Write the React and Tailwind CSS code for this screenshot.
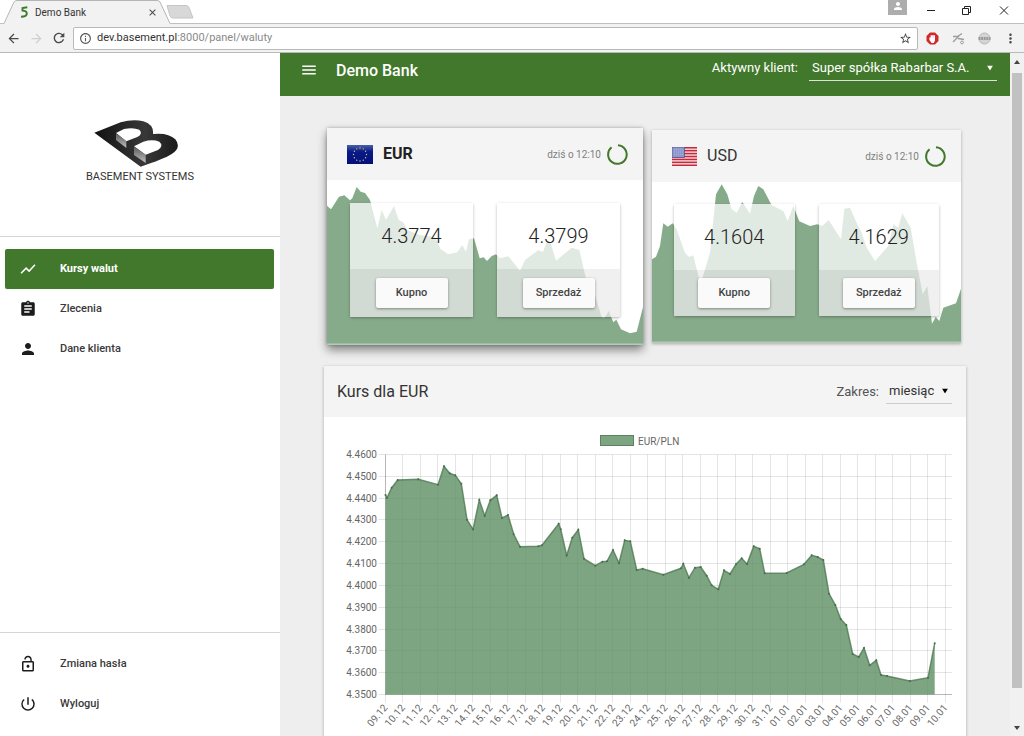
// src/App.jsx
import React, { useState } from 'react';
import {
  MdArrowBack,
  MdArrowForward,
  MdAssignment,
  MdClose,
  MdInfoOutline,
  MdLockOpen,
  MdMenu,
  MdMoreVert,
  MdPerson,
  MdPowerSettingsNew,
  MdRefresh,
  MdShowChart,
  MdStarBorder,
} from 'react-icons/md';

// --- Chart geometry (svg units) ---
const AXIS_LEFT = 61.5;
const AXIS_TOP = 37.5;
const AXIS_BOTTOM = 277.5;
const DAY_STEP = 17.5;
const RATE_STEP = 240 / 11;

const RATE_LABELS = [
  '4.4600', '4.4500', '4.4400', '4.4300', '4.4200', '4.4100',
  '4.4000', '4.3900', '4.3800', '4.3700', '4.3600', '4.3500',
];

const DAY_LABELS = [
  '09.12', '10.12', '11.12', '12.12', '13.12', '14.12', '15.12', '16.12', '17.12', '18.12', '19.12',
  '20.12', '21.12', '22.12', '23.12', '24.12', '25.12', '26.12', '27.12', '28.12', '29.12', '30.12',
  '31.12', '01.01', '02.01', '03.01', '04.01', '05.01', '06.01', '07.01', '08.01', '09.01', '10.01',
];

const MONTH_POINTS = [
  [61.5, 78], [63, 80.7], [67.7, 70.7], [73.7, 63], [94.3, 62.3], [114, 67.7], [120, 49.3], [125.7, 56.3],
  [131.3, 58.3], [137.3, 66.7], [143, 102.7], [149, 112.3], [155.3, 83], [160.7, 98.7], [166.3, 83.3],
  [172.7, 78.3], [178, 101], [184, 98], [189.7, 117.3], [196, 129.7], [214.3, 129.3], [218, 128.3],
  [234.7, 106.7], [236.7, 112.3], [242.7, 138.3], [248.3, 120.7], [254.3, 112.7], [260, 141.7],
  [271.3, 148.7], [278.3, 144.7], [283, 144.3], [289, 133], [295, 146], [300.7, 123.3], [306.3, 124.3],
  [312.7, 153], [318.7, 151.7], [339.3, 157.7], [357, 151.3], [359.3, 146.7], [365, 160.7], [371, 150.7],
  [376.7, 150], [382.7, 158.7], [387.7, 168.3], [394.3, 172.3], [400, 153.3], [406, 157], [412, 147.3],
  [417.7, 141.3], [423, 147], [429.7, 129.3], [435.7, 131.7], [440.7, 156.3], [462.7, 156], [480, 147.3],
  [487.7, 138.3], [493.7, 140], [499.3, 143], [505, 176.7], [511.3, 188], [516.7, 202], [522.3, 208],
  [528.7, 237], [534.7, 240], [540, 231], [545.7, 248.3], [552.3, 243.3], [557, 258], [563, 259],
  [585.7, 264], [604, 260.7], [610.7, 226.3],
];

const EUR_POINTS = [
  [0, 25.7], [4, 29.3], [12, 16.7], [17.3, 15.3], [23, 20.3], [25.3, 18.3], [29.7, 7], [33.7, 11.7],
  [38, 13], [43, 20], [50.3, 48.3], [54.7, 30], [59, 40], [67, 26], [71.7, 40], [76.3, 42.3], [80, 50],
  [93, 55], [108, 57], [113.7, 69.3], [121.3, 74.3], [130.3, 72.3], [135.3, 65], [139, 71.7], [142, 59],
  [147, 58.3], [152.7, 78.3], [156.7, 77.3], [160, 81], [164.7, 76], [169, 74.3], [173, 78.3],
  [181.3, 76.3], [193, 90.7], [198, 80], [211.3, 70], [216, 72], [219.7, 61.7], [223.7, 63.3],
  [229, 80.7], [244.7, 67.7], [252.3, 70], [258.7, 97.3], [268, 115], [274.7, 137.3], [278, 137.3],
  [281.7, 131], [286.3, 142.3], [289.3, 139.7], [294, 149.3], [303, 153.3], [309.7, 151.7], [316, 127],
];

const USD_POINTS = [
  [0, 77.3], [4, 74.7], [8, 64], [11.3, 41.3], [15.7, 44.7], [20.7, 41.3], [24.7, 47.3], [33, 70.7],
  [37, 75], [41.3, 73.3], [47, 96.3], [50.3, 96.3], [58, 70.7], [64, 12.3], [69.7, 2.3], [75.3, 12.3],
  [79.7, 27.3], [84.7, 30.7], [90.3, 20], [98, 31.7], [102, 14], [106.3, 4], [111.3, 7.3],
  [119.7, 23.3], [131.3, 29], [135.7, 39], [141.3, 24], [147.3, 39.3], [158, 44], [165.3, 42.3],
  [170, 44], [176.7, 38], [189, 57.3], [192.3, 26.7], [198, 25.7], [203, 37.3], [209.7, 51],
  [214.7, 65.7], [223, 79], [236.3, 64], [241.3, 42.3], [246.3, 45.7], [250.3, 31.3], [258.7, 45.7],
  [264.7, 80.7], [270.7, 112.3], [275.3, 104], [280, 141.7], [283.7, 135], [287.3, 139],
  [291.3, 125.7], [304, 121.3], [309, 106.7],
];

const toPath = (points) => points.map(([x, y], i) => `${i ? 'L' : 'M'}${x} ${y}`).join(' ');

function BrowserBar() {
  return (
    <div className="shrink-0 bg-white">
      <div className="flex h-6 items-stretch border-b border-[#c0c0c0]">
        <div className="relative -mb-px ml-1 flex w-[166px] items-center pl-4 pr-3">
          <svg className="absolute inset-0 h-full w-full" viewBox="0 0 166 24" preserveAspectRatio="none" aria-hidden="true">
            <path d="M0 23.5 L10 2 Q11 .5 13 .5 H153 Q155 .5 156 2 L166 23.5 V24 H0Z" fill="#f2f2f2" />
            <path d="M0 23.5 L10 2 Q11 .5 13 .5 H153 Q155 .5 156 2 L166 23.5" fill="none" stroke="#b5b5b5" />
          </svg>
          <svg className="relative h-3 w-2" viewBox="0 0 8 12" fill="none" aria-hidden="true">
            <path d="M7.3 1.2 L2.5 2 V4.6 Q6.8 4.8 6.8 7.6 Q6.6 10.6 1 10.8" stroke="#3f7a2e" strokeWidth="1.9" />
          </svg>
          <span className="relative ml-[7px] flex-1 text-[10px] text-[#333]">Demo Bank</span>
          <button type="button" aria-label="Zamknij kartę" className="relative text-[#444]">
            <MdClose className="size-[11px]" />
          </button>
        </div>
        <button type="button" aria-label="Nowa karta" className="-ml-1">
          <svg width="28" height="14" viewBox="0 0 28 14" aria-hidden="true">
            <path d="M1 .5 H20 Q22 .5 23 2.5 L27 13 H7 Q5 13 4 11Z" fill="#d8d8d8" stroke="#c6c6c6" />
          </svg>
        </button>
        <div className="flex flex-1 items-start justify-end">
          <span className="mr-[18px] flex h-[15px] w-[19px] items-start justify-center bg-[#adadad] text-white">
            <MdPerson className="size-3" />
          </span>
          <button type="button" aria-label="Minimalizuj" className="mr-6 mt-[5px] text-[#222]">
            <svg width="12" height="11" viewBox="0 0 12 11" aria-hidden="true"><path d="M2 5.5H10" stroke="currentColor" /></svg>
          </button>
          <button type="button" aria-label="Przywróć" className="mr-7 mt-[5px] text-[#222]">
            <svg width="10" height="11" viewBox="0 0 10 11" fill="none" stroke="currentColor" aria-hidden="true">
              <path d="M1.5 3.5H7.5V9.5H1.5Z M3.5 3V1.5H9.5V7.5H8" />
            </svg>
          </button>
          <button type="button" aria-label="Zamknij" className="mr-[15px] mt-[5px] text-[#222]">
            <svg width="10" height="11" viewBox="0 0 10 11" stroke="currentColor" aria-hidden="true">
              <path d="M1 1.5L9 9.5M9 1.5L1 9.5" />
            </svg>
          </button>
        </div>
      </div>
      <div className="flex h-[29px] items-center border-b border-[#b9b9b9] bg-[#f2f2f2] px-[6px]">
        <button type="button" aria-label="Wstecz" className="mr-2 text-[#4a4a4a]"><MdArrowBack className="size-[15px]" /></button>
        <button type="button" aria-label="Dalej" className="mr-[7px] text-[#cfcfcf]"><MdArrowForward className="size-[15px]" /></button>
        <button type="button" aria-label="Odśwież" className="mr-[6px] text-[#4a4a4a]"><MdRefresh className="size-4" /></button>
        <div className="flex h-[23px] flex-1 items-center rounded-xs border border-[#b9b9b9] bg-white px-[5px]">
          <MdInfoOutline className="size-[13px] text-[#555]" />
          <a href="#waluty" className="ml-[5px] flex-1 text-[11px] leading-4 text-[#8a8a8a]">
            <span className="text-[#333]">dev.basement.pl</span>:8000/panel/waluty
          </a>
          <MdStarBorder className="size-[13px] text-[#444]" />
        </div>
        <svg className="ml-2 size-[13px]" viewBox="0 0 13 13" aria-hidden="true">
          <path d="M4 .5H9L12.5 4V9L9 12.5H4L.5 9V4Z" fill="#cf2a2a" />
          <path d="M4.600 3.200H9V8.500L7.800 11H5.600L3.400 8V5.500H4.600Z" fill="#fff" />
          <path d="M6.100 3V6M7.500 3V6" stroke="#e9a0a0" strokeWidth=".4" />
        </svg>
        <svg className="ml-[13px] size-[13px]" viewBox="0 0 13 13" fill="none" stroke="#9d9d9d" aria-hidden="true">
          <path d="M1 4.500H5.500L10 1.500M7 4L1 10M6 6.500L12 7.500" strokeWidth="1.4" />
          <circle cx="10" cy="10.5" r="1.4" />
        </svg>
        <svg className="ml-[13px] size-[13px]" viewBox="0 0 13 13" aria-hidden="true">
          <circle cx="6.5" cy="6.5" r="5.5" fill="#d4d4d4" stroke="#b8b8b8" />
          <path d="M.5 6.5H12.5" stroke="#9a9a9a" strokeWidth="3" strokeDasharray="2 .6" />
        </svg>
        <button type="button" aria-label="Menu przeglądarki" className="ml-3 text-[#4a4a4a]"><MdMoreVert className="size-[15px]" /></button>
      </div>
    </div>
  );
}

function Logo() {
  return (
    <div className="flex h-[184px] shrink-0 flex-col items-center border-b border-[#d5d5d5] pt-[66px]">
      <svg className="mr-[6px]" width="86" height="50" viewBox="282 56 258 150" aria-hidden="true">
        <defs>
          <linearGradient id="face" x1="0" y1="0" x2="0" y2="1">
            <stop offset="0" stopColor="#5a5a5a" />
            <stop offset="1" stopColor="#bdbdbd" />
          </linearGradient>
          <linearGradient id="body" x1="0" y1="0" x2="1" y2="0">
            <stop offset="0" stopColor="#111" />
            <stop offset=".6" stopColor="#383838" />
            <stop offset="1" stopColor="#1a1a1a" />
          </linearGradient>
        </defs>
        <path
          d="M283 97 L362 66 Q400 55 430 63 Q462 73 459 101 Q505 96 526 117 Q546 142 514 162 Q490 177 422 199Z"
          fill="url(#body)"
        />
        <path d="M348 98 L372 86 Q400 80 418 88 Q430 100 412 110 L379 123Z" fill="#fff" />
        <path d="M348 98 L379 123 V143 L348 119Z" fill="url(#face)" />
        <path d="M402 138 L430 124 Q458 116 478 124 Q492 136 474 149 L437 163Z" fill="#fff" />
        <path d="M402 138 L437 163 V188 L402 164Z" fill="url(#face)" />
      </svg>
      <span className="text-[11px] leading-4 text-[#333]">BASEMENT SYSTEMS</span>
    </div>
  );
}

function NavItem({ icon: Icon, label, active }) {
  return (
    <a
      href={`#${label}`}
      className={
        active
          ? 'flex h-10 items-center gap-[23px] rounded-xs bg-[#41782c] px-[14px] text-[11px] font-bold text-white shadow-xs'
          : 'flex h-10 items-center gap-[23px] px-[14px] text-[11px] font-medium text-[#3a3a3a]'
      }
    >
      <Icon className={active ? 'size-[18px] text-white' : 'size-[18px] text-[#1c1c1c]'} />
      <span>{label}</span>
    </a>
  );
}

function Sidebar() {
  return (
    <aside className="flex w-[280px] shrink-0 flex-col bg-white">
      <Logo />
      <nav className="flex-1 pl-[5px] pr-[6px] pt-3">
        <NavItem icon={MdShowChart} label="Kursy walut" active />
        <NavItem icon={MdAssignment} label="Zlecenia" />
        <NavItem icon={MdPerson} label="Dane klienta" />
      </nav>
      <div className="border-t border-[#d5d5d5] pb-3 pl-[5px] pr-[6px] pt-[11px]">
        <NavItem icon={MdLockOpen} label="Zmiana hasła" />
        <NavItem icon={MdPowerSettingsNew} label="Wyloguj" />
      </div>
    </aside>
  );
}

function Caret() {
  return (
    <svg className="pointer-events-none absolute right-1 top-1/2 h-[5px] w-[6px] -translate-y-1/2" viewBox="0 0 6 5" aria-hidden="true">
      <path d="M0 0H6L3 5Z" fill="currentColor" />
    </svg>
  );
}

function TopBar() {
  return (
    <header className="flex h-[43px] shrink-0 items-start bg-[#41782c] pl-5 pr-[13px] text-white">
      <button type="button" aria-label="Menu" className="mr-[18px] mt-2"><MdMenu className="size-[18px]" /></button>
      <h1 className="flex-1 pt-[6px] text-[16px] font-medium leading-6">Demo Bank</h1>
      <label htmlFor="client" className="mr-[11px] pt-[5px] text-[13px] leading-5">Aktywny klient:</label>
      <div className="relative mt-[3px] w-[188px] border-b border-white/80">
        <select id="client" className="block h-6 w-full appearance-none bg-transparent pl-[3px] pr-4 text-[13px] leading-5">
          <option>Super spółka Rabarbar S.A.</option>
        </select>
        <Caret />
      </div>
    </header>
  );
}

function EuFlag() {
  const stars = Array.from({ length: 12 }, (_, i) => (i * Math.PI) / 6);
  return (
    <svg width="26" height="19" viewBox="0 0 26 19" aria-hidden="true">
      <defs>
        <linearGradient id="eu" x1="0" y1="0" x2="0" y2="1">
          <stop offset="0" stopColor="#4a62a8" />
          <stop offset=".35" stopColor="#0a1a86" />
          <stop offset="1" stopColor="#04107a" />
        </linearGradient>
      </defs>
      <rect width="26" height="19" fill="url(#eu)" />
      {stars.map((a) => (
        <circle key={a} cx={13 + 6.5 * Math.sin(a)} cy={9.5 - 6.5 * Math.cos(a)} r=".7" fill="#c9c998" />
      ))}
    </svg>
  );
}

function UsFlag() {
  return (
    <svg width="25" height="19" viewBox="0 0 25 19" aria-hidden="true">
      <rect width="25" height="19" fill="#f3dcdc" />
      {[0, 1, 2, 3, 4, 5, 6].map((i) => (
        <rect key={i} y={i * 2.92} width="25" height="1.500" fill="#c8283c" />
      ))}
      <rect width="12.5" height="10.5" fill="#8f98cc" stroke="#4c5496" strokeWidth=".8" />
      <path d="M2 2.5H11M2 5H11M2 7.5H11" stroke="#a9afd6" strokeDasharray="1 1" />
    </svg>
  );
}

function OfferBox({ rate, action, large }) {
  return (
    <div className="flex-1 rounded-xs shadow-[0_1px_3px_rgba(0,0,0,0.3)]">
      <div className="flex h-[66px] items-center justify-center bg-white/75 text-[20px] font-light text-[#222]">{rate}</div>
      <div className={large ? 'flex justify-center bg-[#ebebeb]/75 py-[9px]' : 'flex justify-center bg-[#ebebeb]/75 py-2'}>
        <button
          type="button"
          className="h-[30px] min-w-[72px] rounded-xs bg-[#fafafa] px-[13px] text-[11px] font-medium text-[#444] shadow-[0_1px_3px_rgba(0,0,0,0.4)]"
        >
          {action}
        </button>
      </div>
    </div>
  );
}

function CurrencyCard({ flag, code, points, buy, sell, selected }) {
  const width = selected ? 316 : 309;
  const height = selected ? 165 : 161;
  return (
    <section
      className={
        selected
          ? 'bg-white shadow-[0_5px_9px_rgba(0,0,0,0.45),0_0_3px_rgba(0,0,0,0.25)]'
          : 'bg-white shadow-[0_1px_3px_rgba(0,0,0,0.3)]'
      }
    >
      <div className="flex h-[52px] items-center bg-[#f4f4f4] pl-5 pr-[15px]">
        {flag}
        <h2 className={selected ? 'ml-[10px] flex-1 text-[16px] font-bold text-[#222]' : 'ml-[10px] flex-1 text-[16px] text-[#333]'}>
          {code}
        </h2>
        <span className="mr-[6px] text-[10px] text-[#808080]">dziś o 12:10</span>
        <svg width="21" height="21" viewBox="0 0 21 21" fill="none" aria-hidden="true">
          <path d="M11 1.2A9.3 9.3 0 1 1 4.500 3.300" stroke="#41782c" strokeWidth="2" />
        </svg>
      </div>
      <div className={selected ? 'relative px-[23px] pb-[28px] pt-[23px]' : 'relative px-[22px] pb-[27px] pt-[22px]'}>
        <svg className="absolute inset-0 h-full w-full" viewBox={`0 0 ${width} ${height}`} preserveAspectRatio="none" aria-hidden="true">
          <path d={`${toPath(points)} V${height} H0Z`} fill="#86ab8a" />
          <path d={`M0 ${height - 0.5}H${width}`} stroke="#b4ccb6" strokeWidth="2" />
        </svg>
        <div className="relative flex gap-6">
          <OfferBox rate={buy} action="Kupno" large={selected} />
          <OfferBox rate={sell} action="Sprzedaż" large={selected} />
        </div>
      </div>
    </section>
  );
}

function RateChart() {
  return (
    <svg className="block w-full" viewBox="0 0 642 350" role="img" aria-label="EUR/PLN">
      <rect x="276.5" y="18.5" width="33" height="10" fill="#7da582" stroke="#5c8260" />
      <text x="314" y="28" fontSize="10" fill="#666">EUR/PLN</text>
      <g stroke="#000" strokeOpacity=".1">
        {RATE_LABELS.map((label, i) => (
          <path key={label} d={`M${AXIS_LEFT - 7} ${Math.round(i * RATE_STEP) + AXIS_TOP}H628`} />
        ))}
        {DAY_LABELS.map((label, i) => (
          <path key={label} d={`M${Math.floor(i * DAY_STEP) + AXIS_LEFT} ${AXIS_TOP}V${AXIS_BOTTOM + 8}`} />
        ))}
      </g>
      <path d={`M${AXIS_LEFT} ${AXIS_TOP}V${AXIS_BOTTOM}H628`} fill="none" stroke="#000" strokeOpacity=".2" />
      <path d={`${toPath(MONTH_POINTS)} V${AXIS_BOTTOM} H${AXIS_LEFT}Z`} fill="#5d8f63" fillOpacity=".8" />
      <path d={toPath(MONTH_POINTS)} fill="none" stroke="#4d7a53" strokeOpacity=".8" strokeWidth="1.5" />
      {MONTH_POINTS.map(([x, y]) => (
        <circle key={x} cx={x} cy={y} r="1" fill="#4a6a4d" />
      ))}
      <g fontSize="10" fill="#666" textAnchor="end">
        {RATE_LABELS.map((label, i) => (
          <text key={label} x="53" y={Math.round(i * RATE_STEP) + 41}>{label}</text>
        ))}
        {DAY_LABELS.map((label, i) => {
          const x = i * DAY_STEP + 64;
          return (
            <text key={label} x={x} y="291" transform={`rotate(-50 ${x} 291)`}>{label}</text>
          );
        })}
      </g>
    </svg>
  );
}

function ChartCard() {
  const [range, setRange] = useState('miesiąc');

  return (
    <section className="bg-white shadow-[0_1px_3px_rgba(0,0,0,0.3)]">
      <div className="flex h-[51px] items-center bg-[#f4f4f4] pl-[13px] pr-[14px]">
        <h2 className="flex-1 text-[16px] text-[#333]">Kurs dla EUR</h2>
        <label htmlFor="range" className="mr-[7px] text-[13px] text-[#555]">Zakres:</label>
        <div className="relative w-[66px] border-b border-[#ccc]">
          <select
            id="range"
            value={range}
            onChange={(e) => setRange(e.target.value)}
            className="block h-6 w-full appearance-none bg-transparent pl-[3px] text-[13px] text-[#333]"
          >
            <option>miesiąc</option>
            <option>rok</option>
          </select>
          <Caret />
        </div>
      </div>
      <RateChart />
    </section>
  );
}

function Scrollbar() {
  return (
    <div className="flex w-[14px] shrink-0 flex-col items-center bg-[#f1f1f1] text-[#444]">
      <svg className="my-[7px] shrink-0" width="6" height="4" viewBox="0 0 6 4" aria-hidden="true"><path d="M0 4H6L3 0Z" fill="currentColor" /></svg>
      <div className="mt-[2px] w-[10px] flex-1 bg-[#c1c1c1]" />
      <svg className="mb-[6px] mt-[38px] shrink-0" width="6" height="4" viewBox="0 0 6 4" aria-hidden="true"><path d="M0 0H6L3 4Z" fill="currentColor" /></svg>
    </div>
  );
}

export default function App() {
  return (
    <div className="flex h-screen flex-col overflow-hidden font-[Roboto,sans-serif]">
      <BrowserBar />
      <div className="flex min-h-0 flex-1">
        <Sidebar />
        <div className="flex min-w-0 flex-1 flex-col overflow-hidden bg-[#eee]">
          <TopBar />
          <main className="px-11 pt-8">
            <div className="mb-[21px] grid grid-cols-[316fr_309fr] items-center gap-[9px] pl-[3px] pr-[5px]">
              <CurrencyCard flag={<EuFlag />} code="EUR" points={EUR_POINTS} buy="4.3774" sell="4.3799" selected />
              <CurrencyCard flag={<UsFlag />} code="USD" points={USD_POINTS} buy="4.1604" sell="4.1629" />
            </div>
            <ChartCard />
          </main>
        </div>
        <Scrollbar />
      </div>
    </div>
  );
}
